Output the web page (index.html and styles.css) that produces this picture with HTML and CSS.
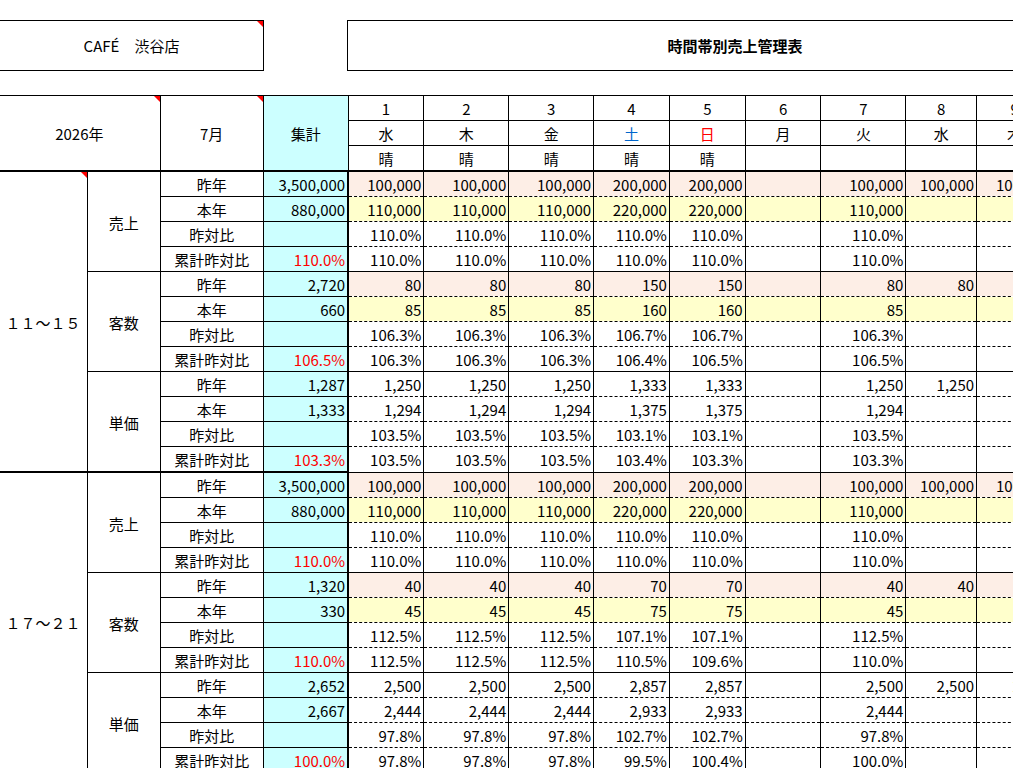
FILE: index.html
```html
<!DOCTYPE html>
<html lang="ja">
<head>
<meta charset="utf-8">
<title>時間帯別売上管理表</title>
<link rel="stylesheet" href="styles.css">
</head>
<body>
<div class="top">
  <div class="box store note">CAFÉ　渋谷店</div>
  <div class="box title">時間帯別売上管理表</div>
</div>
<table class="sheet">
  <colgroup>
    <col class="w-a"><col class="w-b"><col class="w-c"><col class="w-d">
    <col class="w76"><col class="w85"><col class="w85"><col class="w76"><col class="w76"><col class="w76"><col class="w85"><col class="w71"><col class="w76">
  </colgroup>
  <thead>
    <tr>
      <th class="hd note" colspan="2" rowspan="3">2026年</th>
      <th class="hd note" rowspan="3">7月</th>
      <th class="hd sum-h" rowspan="3">集計</th>
      <th class="dh">1</th><th class="dh">2</th><th class="dh">3</th><th class="dh">4</th><th class="dh">5</th><th class="dh">6</th><th class="dh">7</th><th class="dh">8</th><th class="dh">9</th>
    </tr>
    <tr>
      <th class="dh">水</th><th class="dh">木</th><th class="dh">金</th><th class="dh sat">土</th><th class="dh sun">日</th><th class="dh">月</th><th class="dh">火</th><th class="dh">水</th><th class="dh">木</th>
    </tr>
    <tr class="hlast">
      <th class="dh">晴</th><th class="dh">晴</th><th class="dh">晴</th><th class="dh">晴</th><th class="dh">晴</th><th class="dh"></th><th class="dh"></th><th class="dh"></th><th class="dh"></th>
    </tr>
  </thead>
  <tbody>
    <!-- Block 11-15 -->
    <tr class="pink">
      <td class="a note" rowspan="12">１１～１５</td>
      <td class="b" rowspan="4">売上</td>
      <td class="c">昨年</td><td class="s">3,500,000</td>
      <td class="d">100,000</td><td class="d">100,000</td><td class="d">100,000</td><td class="d">200,000</td><td class="d">200,000</td><td class="d"></td><td class="d">100,000</td><td class="d">100,000</td><td class="d">100,000</td>
    </tr>
    <tr class="yel">
      <td class="c">本年</td><td class="s">880,000</td>
      <td class="d">110,000</td><td class="d">110,000</td><td class="d">110,000</td><td class="d">220,000</td><td class="d">220,000</td><td class="d"></td><td class="d">110,000</td><td class="d"></td><td class="d"></td>
    </tr>
    <tr>
      <td class="c">昨対比</td><td class="s"></td>
      <td class="d">110.0%</td><td class="d">110.0%</td><td class="d">110.0%</td><td class="d">110.0%</td><td class="d">110.0%</td><td class="d"></td><td class="d">110.0%</td><td class="d"></td><td class="d"></td>
    </tr>
    <tr class="glast">
      <td class="c">累計昨対比</td><td class="s red">110.0%</td>
      <td class="d">110.0%</td><td class="d">110.0%</td><td class="d">110.0%</td><td class="d">110.0%</td><td class="d">110.0%</td><td class="d"></td><td class="d">110.0%</td><td class="d"></td><td class="d"></td>
    </tr>
    <tr class="pink">
      <td class="b" rowspan="4">客数</td>
      <td class="c">昨年</td><td class="s">2,720</td>
      <td class="d">80</td><td class="d">80</td><td class="d">80</td><td class="d">150</td><td class="d">150</td><td class="d"></td><td class="d">80</td><td class="d">80</td><td class="d">80</td>
    </tr>
    <tr class="yel">
      <td class="c">本年</td><td class="s">660</td>
      <td class="d">85</td><td class="d">85</td><td class="d">85</td><td class="d">160</td><td class="d">160</td><td class="d"></td><td class="d">85</td><td class="d"></td><td class="d"></td>
    </tr>
    <tr>
      <td class="c">昨対比</td><td class="s"></td>
      <td class="d">106.3%</td><td class="d">106.3%</td><td class="d">106.3%</td><td class="d">106.7%</td><td class="d">106.7%</td><td class="d"></td><td class="d">106.3%</td><td class="d"></td><td class="d"></td>
    </tr>
    <tr class="glast">
      <td class="c">累計昨対比</td><td class="s red">106.5%</td>
      <td class="d">106.3%</td><td class="d">106.3%</td><td class="d">106.3%</td><td class="d">106.4%</td><td class="d">106.5%</td><td class="d"></td><td class="d">106.5%</td><td class="d"></td><td class="d"></td>
    </tr>
    <tr>
      <td class="b bend" rowspan="4">単価</td>
      <td class="c">昨年</td><td class="s">1,287</td>
      <td class="d">1,250</td><td class="d">1,250</td><td class="d">1,250</td><td class="d">1,333</td><td class="d">1,333</td><td class="d"></td><td class="d">1,250</td><td class="d">1,250</td><td class="d">1,250</td>
    </tr>
    <tr>
      <td class="c">本年</td><td class="s">1,333</td>
      <td class="d">1,294</td><td class="d">1,294</td><td class="d">1,294</td><td class="d">1,375</td><td class="d">1,375</td><td class="d"></td><td class="d">1,294</td><td class="d"></td><td class="d"></td>
    </tr>
    <tr>
      <td class="c">昨対比</td><td class="s"></td>
      <td class="d">103.5%</td><td class="d">103.5%</td><td class="d">103.5%</td><td class="d">103.1%</td><td class="d">103.1%</td><td class="d"></td><td class="d">103.5%</td><td class="d"></td><td class="d"></td>
    </tr>
    <tr class="glast blast">
      <td class="c">累計昨対比</td><td class="s red">103.3%</td>
      <td class="d">103.5%</td><td class="d">103.5%</td><td class="d">103.5%</td><td class="d">103.4%</td><td class="d">103.3%</td><td class="d"></td><td class="d">103.3%</td><td class="d"></td><td class="d"></td>
    </tr>
    <!-- Block 17-21 -->
    <tr class="pink">
      <td class="a" rowspan="12">１７～２１</td>
      <td class="b" rowspan="4">売上</td>
      <td class="c">昨年</td><td class="s">3,500,000</td>
      <td class="d">100,000</td><td class="d">100,000</td><td class="d">100,000</td><td class="d">200,000</td><td class="d">200,000</td><td class="d"></td><td class="d">100,000</td><td class="d">100,000</td><td class="d">100,000</td>
    </tr>
    <tr class="yel">
      <td class="c">本年</td><td class="s">880,000</td>
      <td class="d">110,000</td><td class="d">110,000</td><td class="d">110,000</td><td class="d">220,000</td><td class="d">220,000</td><td class="d"></td><td class="d">110,000</td><td class="d"></td><td class="d"></td>
    </tr>
    <tr>
      <td class="c">昨対比</td><td class="s"></td>
      <td class="d">110.0%</td><td class="d">110.0%</td><td class="d">110.0%</td><td class="d">110.0%</td><td class="d">110.0%</td><td class="d"></td><td class="d">110.0%</td><td class="d"></td><td class="d"></td>
    </tr>
    <tr class="glast">
      <td class="c">累計昨対比</td><td class="s red">110.0%</td>
      <td class="d">110.0%</td><td class="d">110.0%</td><td class="d">110.0%</td><td class="d">110.0%</td><td class="d">110.0%</td><td class="d"></td><td class="d">110.0%</td><td class="d"></td><td class="d"></td>
    </tr>
    <tr class="pink">
      <td class="b" rowspan="4">客数</td>
      <td class="c">昨年</td><td class="s">1,320</td>
      <td class="d">40</td><td class="d">40</td><td class="d">40</td><td class="d">70</td><td class="d">70</td><td class="d"></td><td class="d">40</td><td class="d">40</td><td class="d">40</td>
    </tr>
    <tr class="yel">
      <td class="c">本年</td><td class="s">330</td>
      <td class="d">45</td><td class="d">45</td><td class="d">45</td><td class="d">75</td><td class="d">75</td><td class="d"></td><td class="d">45</td><td class="d"></td><td class="d"></td>
    </tr>
    <tr>
      <td class="c">昨対比</td><td class="s"></td>
      <td class="d">112.5%</td><td class="d">112.5%</td><td class="d">112.5%</td><td class="d">107.1%</td><td class="d">107.1%</td><td class="d"></td><td class="d">112.5%</td><td class="d"></td><td class="d"></td>
    </tr>
    <tr class="glast">
      <td class="c">累計昨対比</td><td class="s red">110.0%</td>
      <td class="d">112.5%</td><td class="d">112.5%</td><td class="d">112.5%</td><td class="d">110.5%</td><td class="d">109.6%</td><td class="d"></td><td class="d">110.0%</td><td class="d"></td><td class="d"></td>
    </tr>
    <tr>
      <td class="b" rowspan="4">単価</td>
      <td class="c">昨年</td><td class="s">2,652</td>
      <td class="d">2,500</td><td class="d">2,500</td><td class="d">2,500</td><td class="d">2,857</td><td class="d">2,857</td><td class="d"></td><td class="d">2,500</td><td class="d">2,500</td><td class="d">2,500</td>
    </tr>
    <tr>
      <td class="c">本年</td><td class="s">2,667</td>
      <td class="d">2,444</td><td class="d">2,444</td><td class="d">2,444</td><td class="d">2,933</td><td class="d">2,933</td><td class="d"></td><td class="d">2,444</td><td class="d"></td><td class="d"></td>
    </tr>
    <tr>
      <td class="c">昨対比</td><td class="s"></td>
      <td class="d">97.8%</td><td class="d">97.8%</td><td class="d">97.8%</td><td class="d">102.7%</td><td class="d">102.7%</td><td class="d"></td><td class="d">97.8%</td><td class="d"></td><td class="d"></td>
    </tr>
    <tr class="glast">
      <td class="c">累計昨対比</td><td class="s red">100.0%</td>
      <td class="d">97.8%</td><td class="d">97.8%</td><td class="d">97.8%</td><td class="d">99.5%</td><td class="d">100.4%</td><td class="d"></td><td class="d">100.0%</td><td class="d"></td><td class="d"></td>
    </tr>
  </tbody>
</table>
</body>
</html>
```

FILE: styles.css
```css
html, body {
  margin: 0;
  padding: 0;
  background: #fff;
  overflow: hidden;
}
body {
  width: 1013px;
  height: 768px;
  font-family: "Noto Sans CJK JP", "Noto Sans", sans-serif;
  font-size: 15px;
  color: #000;
}
.top {
  display: flex;
  gap: 83px;
  padding-top: 20px;
  margin-left: -1px;
  width: 1400px;
}
.box {
  box-sizing: border-box;
  height: 51px;
  border: 1px solid #000;
  display: flex;
  align-items: center;
  justify-content: center;
  flex: none;
}
.store {
  width: 265px;
  position: relative;
}
.title {
  width: 776px;
  font-weight: bold;
}
.note {
  position: relative;
}
.note::after {
  content: "";
  position: absolute;
  top: 0;
  right: 0;
  width: 0;
  height: 0;
  border-top: 6px solid #ff0000;
  border-left: 6px solid transparent;
}

.sheet {
  margin-top: 24px;
  margin-left: -2px;
  border-collapse: collapse;
  table-layout: fixed;
  width: 1055px;
}
.w-a { width: 88px; }
.w-b { width: 72px; }
.w-c { width: 102px; }
.w-d { width: 84px; }
.w76 { width: 75px; }
.w85 { width: 84px; }
.w71 { width: 70px; }

.sheet th, .sheet td {
  padding: 1px 2px 0;
  height: 23px;
  line-height: 23px;
  font-weight: normal;
  white-space: nowrap;
  overflow: hidden;
  border: 1px solid #000;
}
.sheet th {
  text-align: center;
}
.hd {
  vertical-align: middle;
}
.sum-h {
  background: #ccffff;
  border-right: 2px solid #000;
}
.dh.sat { color: #0066cc; }
.dh.sun { color: #ff0000; }
.hlast th { border-bottom: 2px solid #000; }
.sheet thead th.hd { border-bottom: 2px solid #000; }

.a, .b, .c {
  text-align: center;
  vertical-align: middle;
}
.s {
  text-align: right;
  background: #ccffff;
  border-right: 2px solid #000 !important;
}
.red { color: #ff0000; }
.d {
  text-align: right;
}
.sheet td.d {
  border-top: none;
  border-bottom: 1px dashed #000;
}
.sheet tr.glast td.d {
  border-bottom: 1px solid #000;
}
.sheet tr.blast td {
  border-bottom: 2px solid #000;
}
.sheet td.a, .sheet td.bend {
  border-bottom: 2px solid #000;
}
.pink td.d { background: #fdeee6; }
.yel td.d { background: #ffffcc; }
```
